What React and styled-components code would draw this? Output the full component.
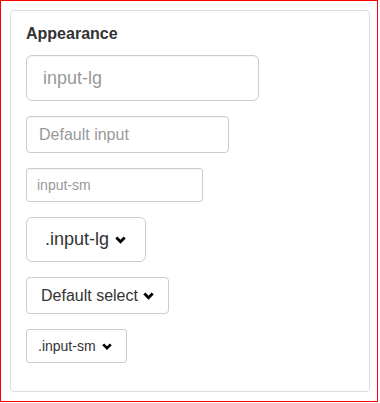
import * as React from "react"
import styled, { createGlobalStyle } from "styled-components"

const GlobalStyle = createGlobalStyle`
  html, body {
    margin: 0;
    padding: 0;
    background: #fff;
  }
  body {
    font-family: "Liberation Sans", Arial, sans-serif;
    color: #333;
  }
  * {
    box-sizing: border-box;
  }
`

const Frame = styled.div`
  width: 378px;
  height: 402px;
  border: 1px solid #ff0000;
  padding: 9px;
`

const Panel = styled.div`
  width: 360px;
  height: 382px;
  border: 1px solid #ddd;
  border-radius: 4px;
  padding: 14px 15px;
`

const Title = styled.h3`
  margin: 0 0 12px;
  font-size: 16px;
  line-height: 18px;
  font-weight: bold;
  color: #333;
`

const Stack = styled.div`
  display: flex;
  flex-direction: column;
  align-items: flex-start;
  gap: 15px;
`

const sizes = {
  lg: { height: 46, font: 18, pad: 16, radius: 6 },
  md: { height: 37, font: 16, pad: 12, radius: 4 },
  sm: { height: 34, font: 14, pad: 10, radius: 3 },
}

const Input = styled.input`
  display: block;
  width: ${p => p.$width}px;
  height: ${p => sizes[p.$size].height}px;
  padding: 0 ${p => sizes[p.$size].pad}px;
  font-family: "Liberation Sans", Arial, sans-serif;
  font-size: ${p => sizes[p.$size].font}px;
  color: #555;
  background: #fff;
  border: 1px solid #ccc;
  border-radius: ${p => sizes[p.$size].radius}px;
  box-shadow: inset 0 1px 1px rgba(0, 0, 0, 0.04);
  outline: none;
  &::placeholder {
    color: #999;
  }
`

const selectSizes = {
  lg: { height: 45, font: 18, padL: 18, padR: 19, gap: 6, radius: 6 },
  md: { height: 37, font: 16, padL: 14, padR: 14, gap: 5, radius: 4 },
  sm: { height: 34, font: 14, padL: 11, padR: 14, gap: 6, radius: 3 },
}

const Select = styled.button`
  display: inline-flex;
  align-items: center;
  gap: ${p => selectSizes[p.$size].gap}px;
  height: ${p => selectSizes[p.$size].height}px;
  padding: 0 ${p => selectSizes[p.$size].padR}px 0 ${p => selectSizes[p.$size].padL}px;
  font-family: "Liberation Sans", Arial, sans-serif;
  font-size: ${p => selectSizes[p.$size].font}px;
  color: #333;
  background: #fff;
  border: 1px solid #ccc;
  border-radius: ${p => selectSizes[p.$size].radius}px;
  cursor: pointer;

  svg {
    margin-top: 1px;
  }
`

const Chevron = ({ w = 10 }) => (
  <svg width={w} height={Math.round(w * 0.7)} viewBox="0 0 10 7" fill="none">
    <polyline
      points="1.2,1.3 5,5.1 8.8,1.3"
      stroke="#000"
      strokeWidth="2.6"
      strokeLinecap="butt"
      strokeLinejoin="miter"
    />
  </svg>
)

const App = () => {
  return (
    <>
      <GlobalStyle />
      <Frame>
        <Panel>
          <Title>Appearance</Title>
          <Stack>
            <Input $size="lg" $width={233} placeholder="input-lg" />
            <Input $size="md" $width={203} placeholder="Default input" />
            <Input $size="sm" $width={177} placeholder="input-sm" />
            <Select $size="lg">
              .input-lg <Chevron w={11} />
            </Select>
            <Select $size="md">
              Default select <Chevron w={11} />
            </Select>
            <Select $size="sm">
              .input-sm <Chevron w={10} />
            </Select>
          </Stack>
        </Panel>
      </Frame>
    </>
  )
}

export default App
